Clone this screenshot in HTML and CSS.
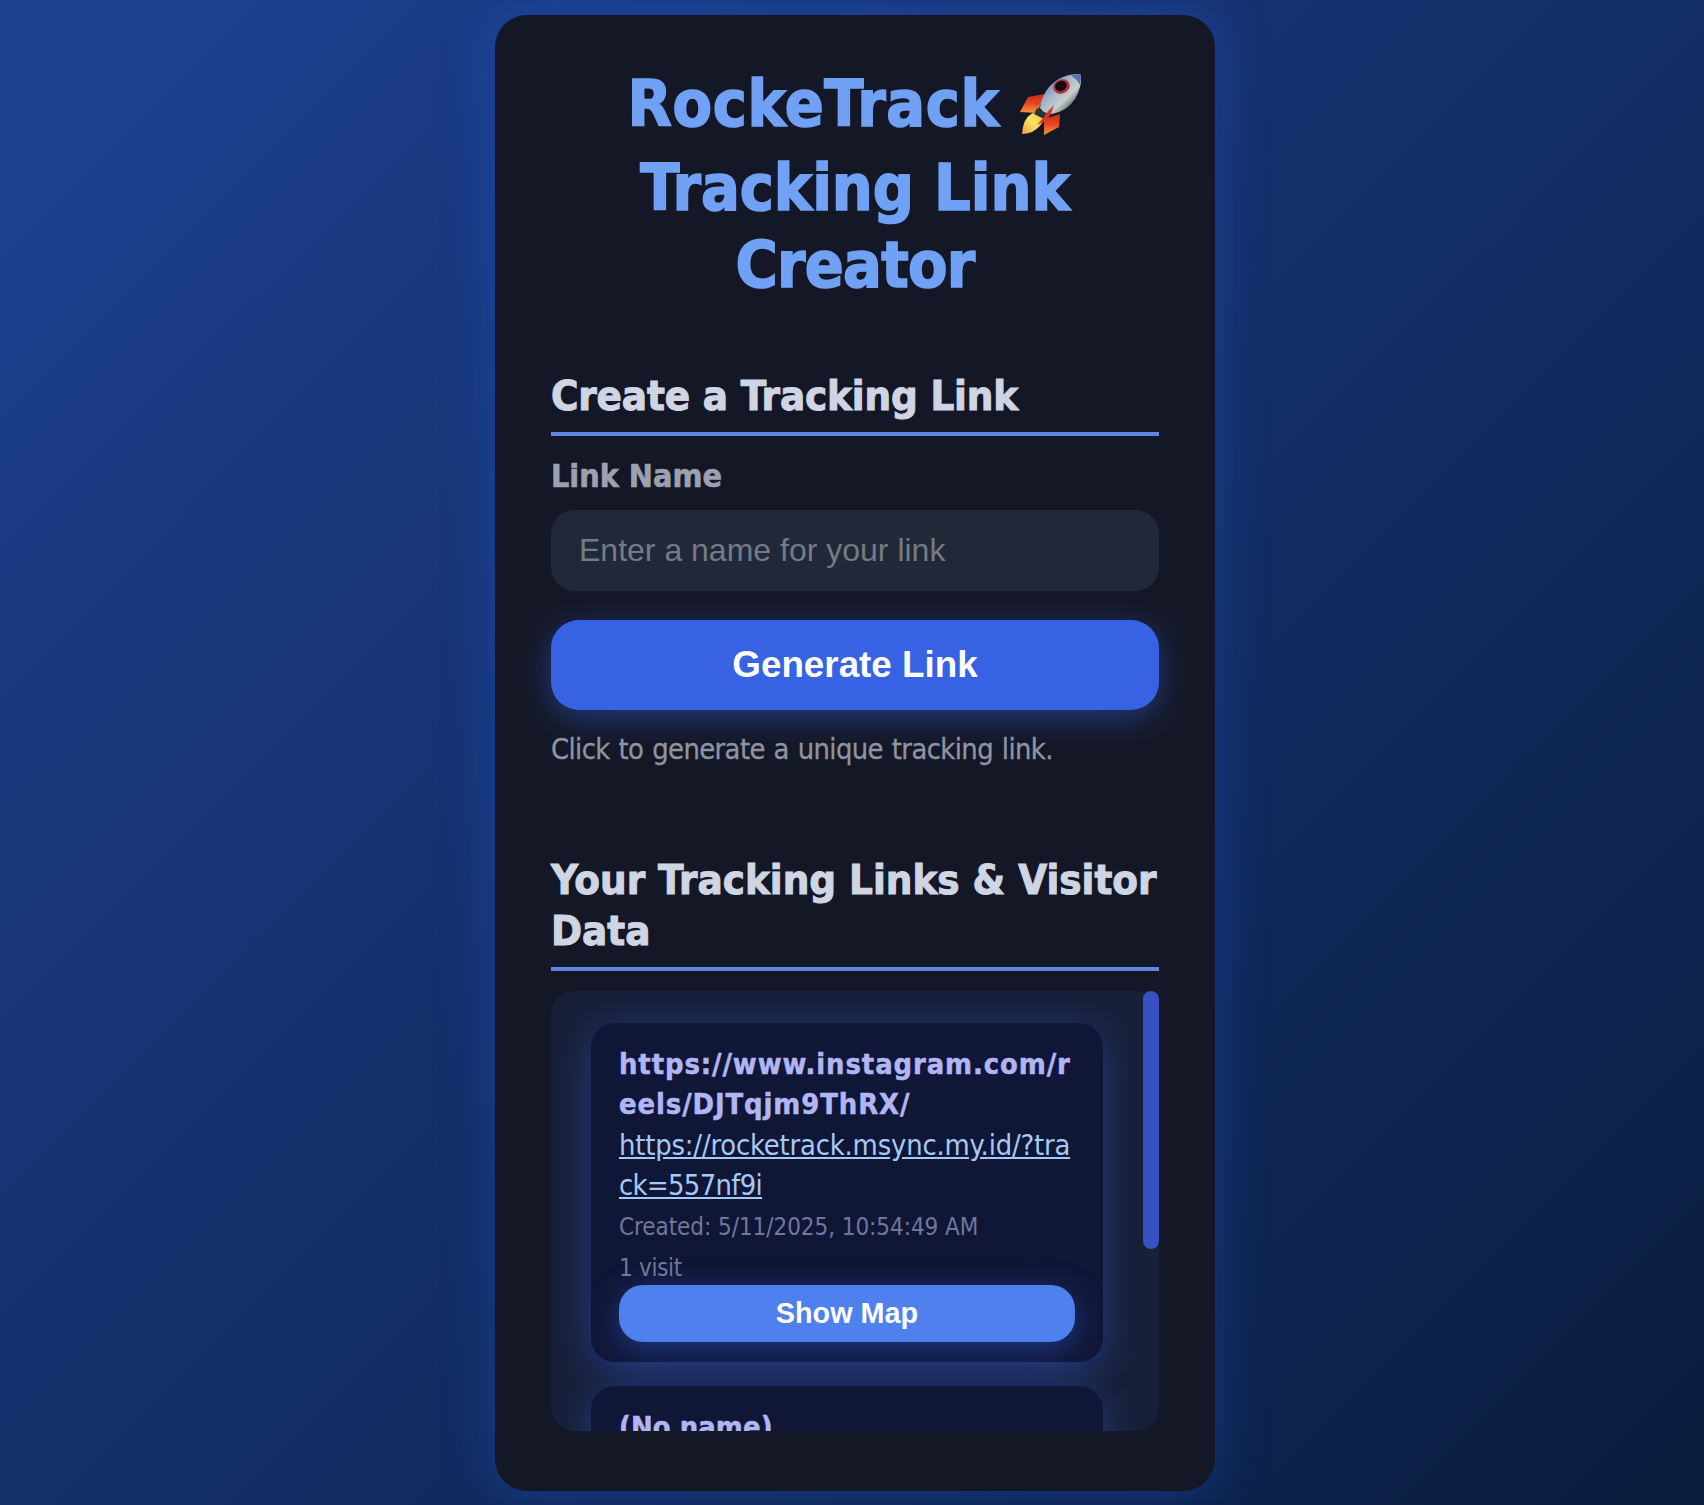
FILE: index.html
```html
<!DOCTYPE html>
<html lang="en">
<head>
<meta charset="utf-8">
<title>RockeTrack</title>
<link rel="stylesheet" href="styles.css">
</head>
<body>
<main class="card">
  <h1 class="title">
    <span class="title-line title-brand"><span>RockeTrack</span>
      <svg class="rocket" viewBox="0 0 64 64" aria-hidden="true">
        <defs>
          <linearGradient id="hull" x1="0.2" y1="0.2" x2="0.8" y2="0.8">
            <stop offset="0" stop-color="#6d8cb8"/><stop offset="0.4" stop-color="#a9bccb"/><stop offset="0.7" stop-color="#c9cfcc"/><stop offset="1" stop-color="#66696f"/>
          </linearGradient>
          <linearGradient id="fin" x1="0" y1="0" x2="0" y2="1">
            <stop offset="0" stop-color="#c92a1c"/><stop offset="0.5" stop-color="#e8481f"/><stop offset="1" stop-color="#f59a3c"/>
          </linearGradient>
          <linearGradient id="flame" x1="1" y1="0" x2="0" y2="1">
            <stop offset="0" stop-color="#f3b62a"/><stop offset="0.5" stop-color="#fbe366"/><stop offset="1" stop-color="#f2a33a"/>
          </linearGradient>
        </defs>
        <path d="M9 24 L26 21 L18 40 L1 39 Z" fill="url(#fin)"/>
        <path d="M41 41 L40 54 L25 62 L25 46 Z" fill="url(#fin)"/>
        <path d="M12 41 Q4 46 3 61 Q8 61 13 59 Q22 54 26 45 L19 38 Z" fill="url(#flame)"/>
        <path d="M18 35 L30 42 L25 46 L15 41 Z" fill="#27313f"/>
        <path d="M60 1 Q42 1 30 14 Q22 24 21 35 Q25 41 33 41 Q47 39 56 26 Q63 14 62 3 Q62 1 60 1 Z" fill="url(#hull)"/>
        <path d="M60 1 Q56 1 52 2.500 Q58 6 61 12 Q62 7 62 3 Q62 1 60 1 Z" fill="#5674a8"/>
        <path d="M35 32 Q29 37 25 44 L18 52 Q28 48 32 41 Z" fill="#d23a27"/>
        <ellipse cx="42.500" cy="13.500" rx="8.500" ry="7" transform="rotate(-25 42.500 13.500)" fill="#b52f3d"/>
        <ellipse cx="42" cy="13" rx="6" ry="5" transform="rotate(-25 42 13)" fill="#150d12"/>
      </svg></span>
    <span class="title-line">Tracking Link</span>
    <span class="title-line title-last">Creator</span>
  </h1>

  <section class="create">
    <h2 class="heading">Create a Tracking Link</h2>
    <label class="label" for="name">Link Name</label>
    <input class="field" id="name" type="text" placeholder="Enter a name for your link">
    <button class="generate" type="button">Generate Link</button>
    <p class="hint">Click to generate a unique tracking link.</p>
  </section>

  <section class="links">
    <h2 class="heading heading-links">Your Tracking Links &amp; Visitor<br>Data</h2>
    <div class="list">
      <div class="items">
        <article class="item">
          <div class="name name-url">https://www.instagram.com/r<br>eels/DJTqjm9ThRX/</div>
          <a class="url" href="#">https://rocketrack.msync.my.id/?tra<br><span class="url-code">ck=557nf9i</span></a>
          <div class="meta created">Created: 5/11/2025, 10:54:49 AM</div>
          <div class="meta visits">1 visit</div>
          <button class="map" type="button">Show Map</button>
        </article>
        <article class="item">
          <div class="name">(No name)</div>
        </article>
      </div>
      <div class="thumb"></div>
    </div>
  </section>
</main>
</body>
</html>
```
FILE: styles.css
```css
* { box-sizing: border-box; }
body {
  margin: 0;
  height: 1505px;
  overflow: hidden;
  padding-top: 15px;
  background: linear-gradient(135deg, #1e4192 0%, #0a1d3e 100%);
  font-family: "DejaVu Sans Condensed", "DejaVu Sans", sans-serif;
  font-stretch: condensed;
}
.card {
  width: 720px;
  height: 1476px;
  margin: 0 auto 0 495px;
  padding: 51px 56px 0;
  border-radius: 32px;
  background: #141826;
  box-shadow: 0 0 52px rgba(37, 99, 235, 0.34);
}
.title {
  margin: 0;
  color: #70a1f5;
  font-size: 64px;
  line-height: 77px;
  text-align: center;
  -webkit-text-stroke: 1.6px #70a1f5;
}
.title-line { display: block; }
.title-brand {
  display: flex;
  justify-content: center;
  align-items: center;
  height: 77px;
  margin-bottom: 7px;
  letter-spacing: 0.65px;
}
.title-last { letter-spacing: -0.7px; }
.rocket { width: 64px; height: 64px; margin-left: 19px; }
.create { margin-top: 66px; }
.heading {
  margin: 0;
  padding-bottom: 11px;
  border-bottom: 4px solid #5f83e6;
  color: #d0d5e3;
  font-size: 41.6px;
  line-height: 51px;
  letter-spacing: -0.15px;
  white-space: nowrap;
  -webkit-text-stroke: 1px #d0d5e3;
}
.heading-links { letter-spacing: 0; }
.label {
  display: block;
  margin-top: 20px;
  color: #9ca0b0;
  font-size: 32px;
  line-height: 40px;
  font-weight: bold;
  -webkit-text-stroke: 0.6px #9ca0b0;
}
.field {
  display: block;
  width: 100%;
  height: 81px;
  margin-top: 14px;
  padding: 0 28px;
  border: 0;
  border-radius: 24px;
  background: #212938;
  font: 32px "Liberation Sans", Arial, sans-serif;
}
.field::placeholder { color: #757b85; }
.generate {
  display: block;
  width: 100%;
  height: 90px;
  margin-top: 29px;
  border: 0;
  border-radius: 28px;
  background: #3662e3;
  color: #fff;
  font: bold 36.8px "Liberation Sans", Arial, sans-serif;
  box-shadow: 0 8px 32px rgba(54, 98, 227, 0.45);
}
.hint {
  margin: 20px 0 0;
  color: #8f94a1;
  font-size: 28.8px;
  line-height: 38px;
  letter-spacing: -0.6px;
  word-spacing: 1.2px;
  -webkit-text-stroke: 0.3px #8f94a1;
}
.links { margin-top: 86px; }
.list {
  display: grid;
  grid-template-columns: minmax(0, 1fr);
  height: 440px;
  margin-top: 20px;
}
.items, .thumb { grid-area: 1 / 1; }
.items {
  height: 440px;
  padding: 32px 56px 0 40px;
  border-radius: 24px;
  background: #182039;
  overflow: hidden;
}
.item {
  height: 339px;
  margin-bottom: 24px;
  padding: 21px 28px;
  border-radius: 24px;
  background: #101636;
  box-shadow: 0 8px 36px rgba(54, 98, 227, 0.42);
}
.name {
  color: #b1b5f4;
  font-size: 28.8px;
  line-height: 40px;
  font-weight: bold;
  letter-spacing: 0.1px;
  white-space: nowrap;
  -webkit-text-stroke: 0.5px #b1b5f4;
}
.name-url { letter-spacing: 0.92px; }
.url {
  display: block;
  margin-top: 1px;
  color: #a5c9f8;
  font-size: 28.8px;
  line-height: 40px;
  letter-spacing: -0.18px;
  white-space: nowrap;
}
.url-code { letter-spacing: -0.65px; }
.meta {
  color: #71769b;
  font-size: 24px;
  line-height: 40.5px;
  letter-spacing: -0.06px;
}
.created { margin-top: 2px; }
.visits { letter-spacing: -0.3px; }
.map {
  display: block;
  width: 100%;
  height: 57px;
  margin-top: -3px;
  border: 0;
  border-radius: 24px;
  background: #4e80ee;
  color: #fff;
  font: bold 28.8px "Liberation Sans", Arial, sans-serif;
  box-shadow: 0 8px 32px rgba(54, 98, 227, 0.45);
}
.thumb {
  justify-self: end;
  width: 16px;
  height: 258px;
  border-radius: 8px;
  background: #3751c3;
}
```
